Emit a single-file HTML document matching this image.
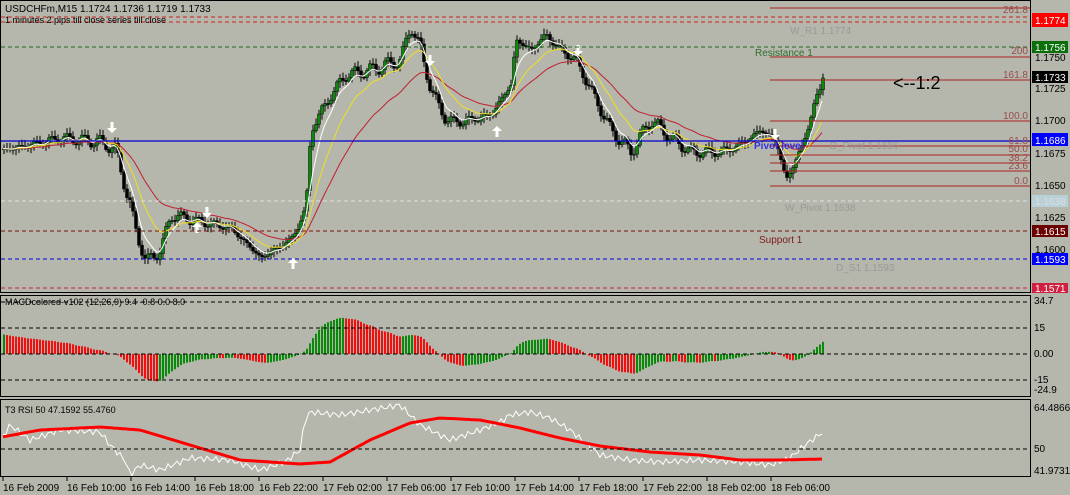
<!DOCTYPE html>
<html><head><meta charset="utf-8"><style>
body{margin:0;background:#b5b7ad;width:1070px;height:495px;overflow:hidden;font-family:"Liberation Sans",sans-serif}
svg{display:block;font-family:"Liberation Sans",sans-serif}
</style></head><body>
<svg id="s" width="1070" height="495" viewBox="0 0 1070 495" font-size="10">
<rect width="1070" height="495" fill="#b5b7ad"/>
<g id="g"></g>
<rect x="0.5" y="0.5" width="1030" height="292" fill="none" stroke="#000"/>
<rect x="0.5" y="295.5" width="1030" height="101" fill="none" stroke="#000"/>
<rect x="0.5" y="399.5" width="1030" height="77" fill="none" stroke="#000"/>
<g stroke-dasharray="4,3" fill="none">
<line x1="1" y1="17" x2="1030" y2="17" stroke="#d02020"/>
<line x1="1" y1="22" x2="1030" y2="22" stroke="#d02020"/>
<line x1="1" y1="47" x2="1030" y2="47" stroke="#1a6e1a"/>
<line x1="1" y1="201" x2="1030" y2="201" stroke="#e0e0e0"/>
<line x1="1" y1="231" x2="1030" y2="231" stroke="#7a1010"/>
<line x1="1" y1="259" x2="1030" y2="259" stroke="#0000e0"/>
<line x1="1" y1="288" x2="1030" y2="288" stroke="#d02040"/>
</g>
<line x1="1" y1="141" x2="1030" y2="141" stroke="#0000d0" stroke-width="1.2"/>
<g stroke="#b02020" fill="none">
<line x1="770" y1="8" x2="1030" y2="8"/><line x1="770" y1="57" x2="1030" y2="57"/>
<line x1="770" y1="80" x2="1030" y2="80"/><line x1="770" y1="121" x2="1030" y2="121"/>
<line x1="770" y1="146" x2="1030" y2="146"/><line x1="770" y1="155" x2="1030" y2="155"/>
<line x1="770" y1="163" x2="1030" y2="163"/><line x1="770" y1="171" x2="1030" y2="171"/>
<line x1="770" y1="186" x2="1030" y2="186"/>
</g>
<g fill="#9a4a4a" text-anchor="end" font-size="10">
<text x="1028" y="13">261.8</text><text x="1028" y="54">200</text><text x="1028" y="78">161.8</text>
<text x="1028" y="119">100.0</text><text x="1028" y="144">61.8</text><text x="1028" y="152">50.0</text>
<text x="1028" y="161">38.2</text><text x="1028" y="169">23.6</text><text x="1028" y="184">0.0</text>
</g>
<text x="790" y="34" fill="#999">W_R1 1.1774</text>
<text x="755" y="56" fill="#2e6e2e">Resistance 1</text>
<text x="830" y="149" fill="#999">D_Pivot 1.1686</text>
<text x="785" y="211" fill="#999">W_Pivot 1.1638</text>
<text x="759" y="243" fill="#7a1a1a">Support 1</text>
<text x="836" y="271" fill="#999">D_S1 1.1593</text>
<text x="754" y="149" fill="#3030e0" font-weight="bold">Pivot level</text>
<text x="893" y="89" font-size="18" fill="#000">&lt;--1:2</text>
<text x="5" y="12" fill="#000">USDCHFm,M15  1.1724 1.1736 1.1719 1.1733</text>
<text x="5" y="23" fill="#000" font-size="9">1 minutes 2 pips till close series till close</text>
<g font-size="10" fill="#000">
<rect x="1032" y="13" width="36" height="14" fill="#f00"/><text x="1035" y="24" fill="#fff">1.1774</text>
<rect x="1032" y="41" width="36" height="12" fill="#0a6e0a"/><text x="1035" y="51" fill="#fff">1.1756</text>
<text x="1035" y="61">1.1750</text>
<rect x="1032" y="71" width="36" height="12" fill="#000"/><text x="1035" y="81" fill="#fff">1.1733</text>
<text x="1035" y="92">1.1725</text><text x="1035" y="124">1.1700</text>
<rect x="1032" y="133" width="36" height="13" fill="#00f"/><text x="1035" y="144" fill="#fff">1.1686</text>
<text x="1035" y="157">1.1675</text><text x="1035" y="189">1.1650</text>
<rect x="1032" y="195" width="36" height="12" fill="#b8d0d8"/><text x="1035" y="205" fill="#ddd">1.1638</text>
<text x="1035" y="221">1.1625</text>
<rect x="1032" y="225" width="36" height="12" fill="#6a0000"/><text x="1035" y="235" fill="#fff">1.1615</text>
<text x="1035" y="253">1.1600</text>
<rect x="1032" y="253" width="36" height="12" fill="#00f"/><text x="1035" y="263" fill="#fff">1.1593</text>
<rect x="1032" y="283" width="36" height="10" fill="#d02040"/><text x="1035" y="292" fill="#fff">1.1571</text>
<text x="1034" y="304">34.7</text><text x="1034" y="331">15</text><text x="1034" y="357">0.00</text>
<text x="1034" y="383">-15</text><text x="1034" y="393">-24.9</text>
<text x="1034" y="411">64.4866</text><text x="1034" y="452">50</text><text x="1034" y="474">41.9731</text>
</g>
<g stroke="#000" stroke-dasharray="4,3">
<line x1="1" y1="302" x2="1030" y2="302"/><line x1="1" y1="328" x2="1030" y2="328"/>
<line x1="1" y1="354" x2="1030" y2="354"/><line x1="1" y1="380" x2="1030" y2="380"/>
<line x1="1" y1="449" x2="1030" y2="449"/>
</g>
<text x="5" y="305" fill="#000" font-size="9">MACDcolored-v102 (12,26,9) 9.4 -0.8 0.0 8.0</text>
<text x="5" y="413" fill="#000" font-size="9">T3 RSI 50 47.1592 55.4760</text>
<g id="t" fill="#000" font-size="10"></g>
</svg>
<script>
var g=document.getElementById('g'),NS='http://www.w3.org/2000/svg';
function el(n,a){var e=document.createElementNS(NS,n);for(var k in a)e.setAttribute(k,a[k]);g.appendChild(e);return e;}
function interp(kp,x){for(var i=1;i<kp.length;i++){if(x<=kp[i][0]){var a=kp[i-1],b=kp[i],t=(x-a[0])/(b[0]-a[0]);return a[1]+(b[1]-a[1])*t;}}return kp[kp.length-1][1];}
var kp=[[2,150],[30,145],[60,138],[100,142],[115,150],[125,190],[135,230],[145,262],[160,250],[170,215],[200,222],[230,228],[260,258],[290,240],[305,210],[310,130],[330,95],[345,75],[370,70],[400,60],[410,25],[420,50],[430,90],[445,120],[460,122],[490,115],[510,85],[515,40],[530,50],[545,35],[560,50],[575,60],[590,90],[610,130],[630,152],[650,120],[670,138],[690,152],[720,152],[740,145],[760,130],[775,140],[785,180],[800,150],[815,100],[823,78]];
var ys=[],xs=[];
for(var x=3;x<=823;x+=3){var n=Math.sin(x*1.7)*4+Math.sin(x*0.37)*3;xs.push(x);ys.push(interp(kp,x)+n);}
ys[ys.length-1]=78;
var prev=ys[0];
for(var i=0;i<ys.length;i++){var o=prev,c=ys[i],x=xs[i];var hi=Math.min(o,c)-2-Math.abs(Math.sin(x*2.3))*4,lo=Math.max(o,c)+2+Math.abs(Math.cos(x*1.9))*4;
el('line',{x1:x+1,y1:hi,x2:x+1,y2:lo,stroke:'#000'});
var bull=c<o;el('rect',{x:x-0.5,y:Math.min(o,c),width:3,height:Math.max(1,Math.abs(c-o)),fill:bull?'#0a8a0a':'#000',stroke:'#000','stroke-width':0.5});prev=c;}
function ema(a,p){var k=2/(p+1),r=[],v=a[0];for(var i=0;i<a.length;i++){v=a[i]*k+v*(1-k);r.push(v);}return r;}
function pl(a,col,w){var d='';for(var i=0;i<a.length;i++)d+=(i?'L':'M')+xs[i]+','+a[i].toFixed(1);el('path',{d:d,fill:'none',stroke:col,'stroke-width':w});}
pl(ema(ys,30),'#c02030',1);pl(ema(ys,14),'#f0e020',1);pl(ema(ys,6),'#ffffff',1);
var e12=ema(ys,12),e26=ema(ys,26),pv=0;
for(var i=0;i<ys.length;i++){var x=xs[i];var h=(e26[i]-e12[i])*0.9+20*Math.max(0,1-x/115);h=Math.max(-38,Math.min(50,h));var col=h>=pv?'#0a8a0a':'#f01010';
el('rect',{x:x,y:h>0?354-h:354,width:2,height:Math.abs(h),fill:col});pv=h;}
var wk=[[2,438],[10,425],[30,440],[60,430],[100,432],[110,445],[125,460],[130,475],[140,465],[160,470],[190,458],[230,460],[260,470],[285,462],[300,450],[305,420],[310,412],[340,415],[400,405],[420,425],[450,440],[480,430],[500,422],[510,415],[530,412],[550,418],[570,430],[600,455],[630,460],[660,462],[700,460],[740,462],[770,465],[790,458],[805,445],[823,432]];
var w=[];for(var i=0;i<xs.length;i++){w.push(interp(wk,xs[i])+Math.sin(xs[i]*1.3)*3);}
pl(w,'#ffffff',1);
var rk=[[2,437],[40,430],[100,427],[140,430],[200,448],[240,460],[300,464],[330,462],[370,440],[410,423],[440,418],[480,420],[520,428],[560,438],[600,446],[650,452],[700,455],[740,460],[780,460],[823,459]];
var d='';for(var i=0;i<xs.length;i++)d+=(i?'L':'M')+xs[i]+','+interp(rk,xs[i]).toFixed(1);el('path',{d:d,fill:'none',stroke:'#ff0000','stroke-width':3});
[[112,133,1],[207,218,1],[197,222,0],[293,258,0],[430,66,1],[497,126,0],[578,56,1],[775,140,1]].forEach(function(a){var x=a[0],y=a[1],s=a[2]?-1:1;
el('path',{d:'M'+x+','+y+' L'+(x-5)+','+(y+5*s)+' L'+(x-1.5)+','+(y+5*s)+' L'+(x-1.5)+','+(y+11*s)+' L'+(x+1.5)+','+(y+11*s)+' L'+(x+1.5)+','+(y+5*s)+' L'+(x+5)+','+(y+5*s)+' Z',fill:'#fff'});});
var t=document.getElementById('t'),L=['16 Feb 2009','16 Feb 10:00','16 Feb 14:00','16 Feb 18:00','16 Feb 22:00','17 Feb 02:00','17 Feb 06:00','17 Feb 10:00','17 Feb 14:00','17 Feb 18:00','17 Feb 22:00','18 Feb 02:00','18 Feb 06:00'];
L.forEach(function(s,i){var x=3+i*64;var e=document.createElementNS(NS,'text');e.setAttribute('x',x);e.setAttribute('y',491);e.textContent=s;t.appendChild(e);var l=document.createElementNS(NS,'line');l.setAttribute('x1',x);l.setAttribute('x2',x);l.setAttribute('y1',477);l.setAttribute('y2',481);l.setAttribute('stroke','#000');t.appendChild(l);});
</script>
</body></html>
